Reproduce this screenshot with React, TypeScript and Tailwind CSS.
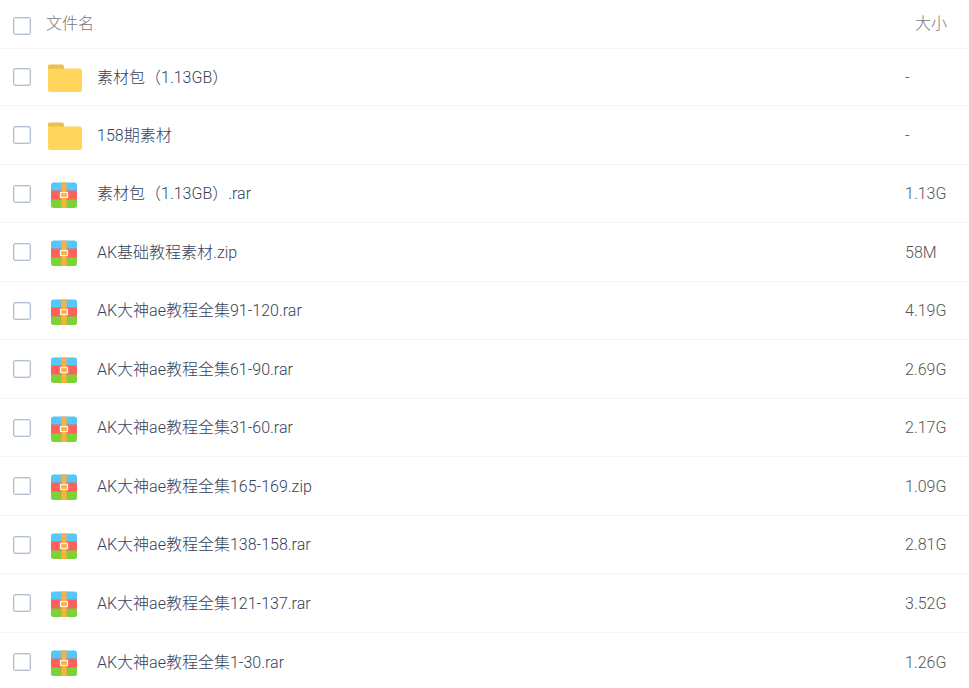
type FileKind = "folder" | "archive";

interface FileItem {
    name: string;
    size: string;
    kind: FileKind;
}

const files: FileItem[] = [
    { name: "素材包（1.13GB）", size: "-", kind: "folder" },
    { name: "158期素材", size: "-", kind: "folder" },
    { name: "素材包（1.13GB）.rar", size: "1.13G", kind: "archive" },
    { name: "AK基础教程素材.zip", size: "58M", kind: "archive" },
    { name: "AK大神ae教程全集91-120.rar", size: "4.19G", kind: "archive" },
    { name: "AK大神ae教程全集61-90.rar", size: "2.69G", kind: "archive" },
    { name: "AK大神ae教程全集31-60.rar", size: "2.17G", kind: "archive" },
    { name: "AK大神ae教程全集165-169.zip", size: "1.09G", kind: "archive" },
    { name: "AK大神ae教程全集138-158.rar", size: "2.81G", kind: "archive" },
    { name: "AK大神ae教程全集121-137.rar", size: "3.52G", kind: "archive" },
    { name: "AK大神ae教程全集1-30.rar", size: "1.26G", kind: "archive" },
];

function FolderIcon() {
    return (
        <svg width="34" height="28" viewBox="0 0 34 28" aria-hidden="true">
            <path d="M0 8V2Q0 .5 1.500 .5H14Q16 .5 16 2.500V8Z" fill="#ecc04e" />
            <path d="M0 4.500H32Q34 4.500 34 6.500V26Q34 28 32 28H2Q0 28 0 26Z" fill="#ffd65b" />
        </svg>
    );
}

function ArchiveIcon() {
    return (
        <svg width="28" height="28" viewBox="0 0 28 28" aria-hidden="true">
            <path d="M1 10V4Q1 1.500 3.500 1.500H24.500Q27 1.500 27 4V10Z" fill="#55c7f8" />
            <path d="M1 18H27V24.500Q27 27 24.500 27H3.500Q1 27 1 24.500Z" fill="#7fd138" />
            <path d="M1 9.500H27V18.500H1Z" fill="#fb615d" />
            <path d="M11.500 1.500H16.500V27H11.500Z" fill="#ffae40" />
            <rect x="10.500" y="11.500" width="7" height="5" fill="#ffae40" stroke="#fff3dc" strokeWidth="1.300" />
        </svg>
    );
}

function CheckBox({ label }: { label: string }) {
    return (
        <input
            type="checkbox"
            aria-label={label}
            className="block size-[18px] appearance-none rounded-[2px] border border-[#b3bfce] bg-white ring-1 ring-[#e3e9f0] ring-inset checked:bg-[#3b8cff]"
        />
    );
}

export default function App() {
    return (
        <main className="min-h-screen bg-white font-['Roboto','Noto_Sans_CJK_SC',sans-serif] text-base font-light">
            <table className="w-full table-fixed border-separate border-spacing-0 text-left">
                <colgroup>
                    <col className="w-[46px]" />
                    <col />
                    <col className="w-16" />
                </colgroup>
                <thead>
                    <tr className="h-[49px] text-[#777777] *:border-b *:border-[#f2f5fa]">
                        <th className="pt-1 pl-[13px]">
                            <CheckBox label="全选" />
                        </th>
                        <th className="font-light">文件名</th>
                        <th className="pl-[10px] font-light">大小</th>
                    </tr>
                </thead>
                <tbody>
                    {files.map((file) => (
                        <tr
                            key={file.name}
                            className="h-[59px] *:border-b *:border-[#f0f5fc] odd:h-[58px] first:h-[57px]! last:*:border-b-0"
                        >
                            <td className="pl-[13px]">
                                <CheckBox label={file.name} />
                            </td>
                            <td className="pt-px">
                                <a href="#" className="flex items-center text-[#364159]">
                                    <span className="flex w-[51px] shrink-0 pl-0.5">
                                        {file.kind === "folder" ? (
                                            <FolderIcon />
                                        ) : (
                                            <span className="pt-px pl-[2px]">
                                                <ArchiveIcon />
                                            </span>
                                        )}
                                    </span>
                                    <span className="truncate">{file.name}</span>
                                </a>
                            </td>
                            <td className="pt-px text-[#555555]">{file.size}</td>
                        </tr>
                    ))}
                </tbody>
            </table>
        </main>
    );
}
